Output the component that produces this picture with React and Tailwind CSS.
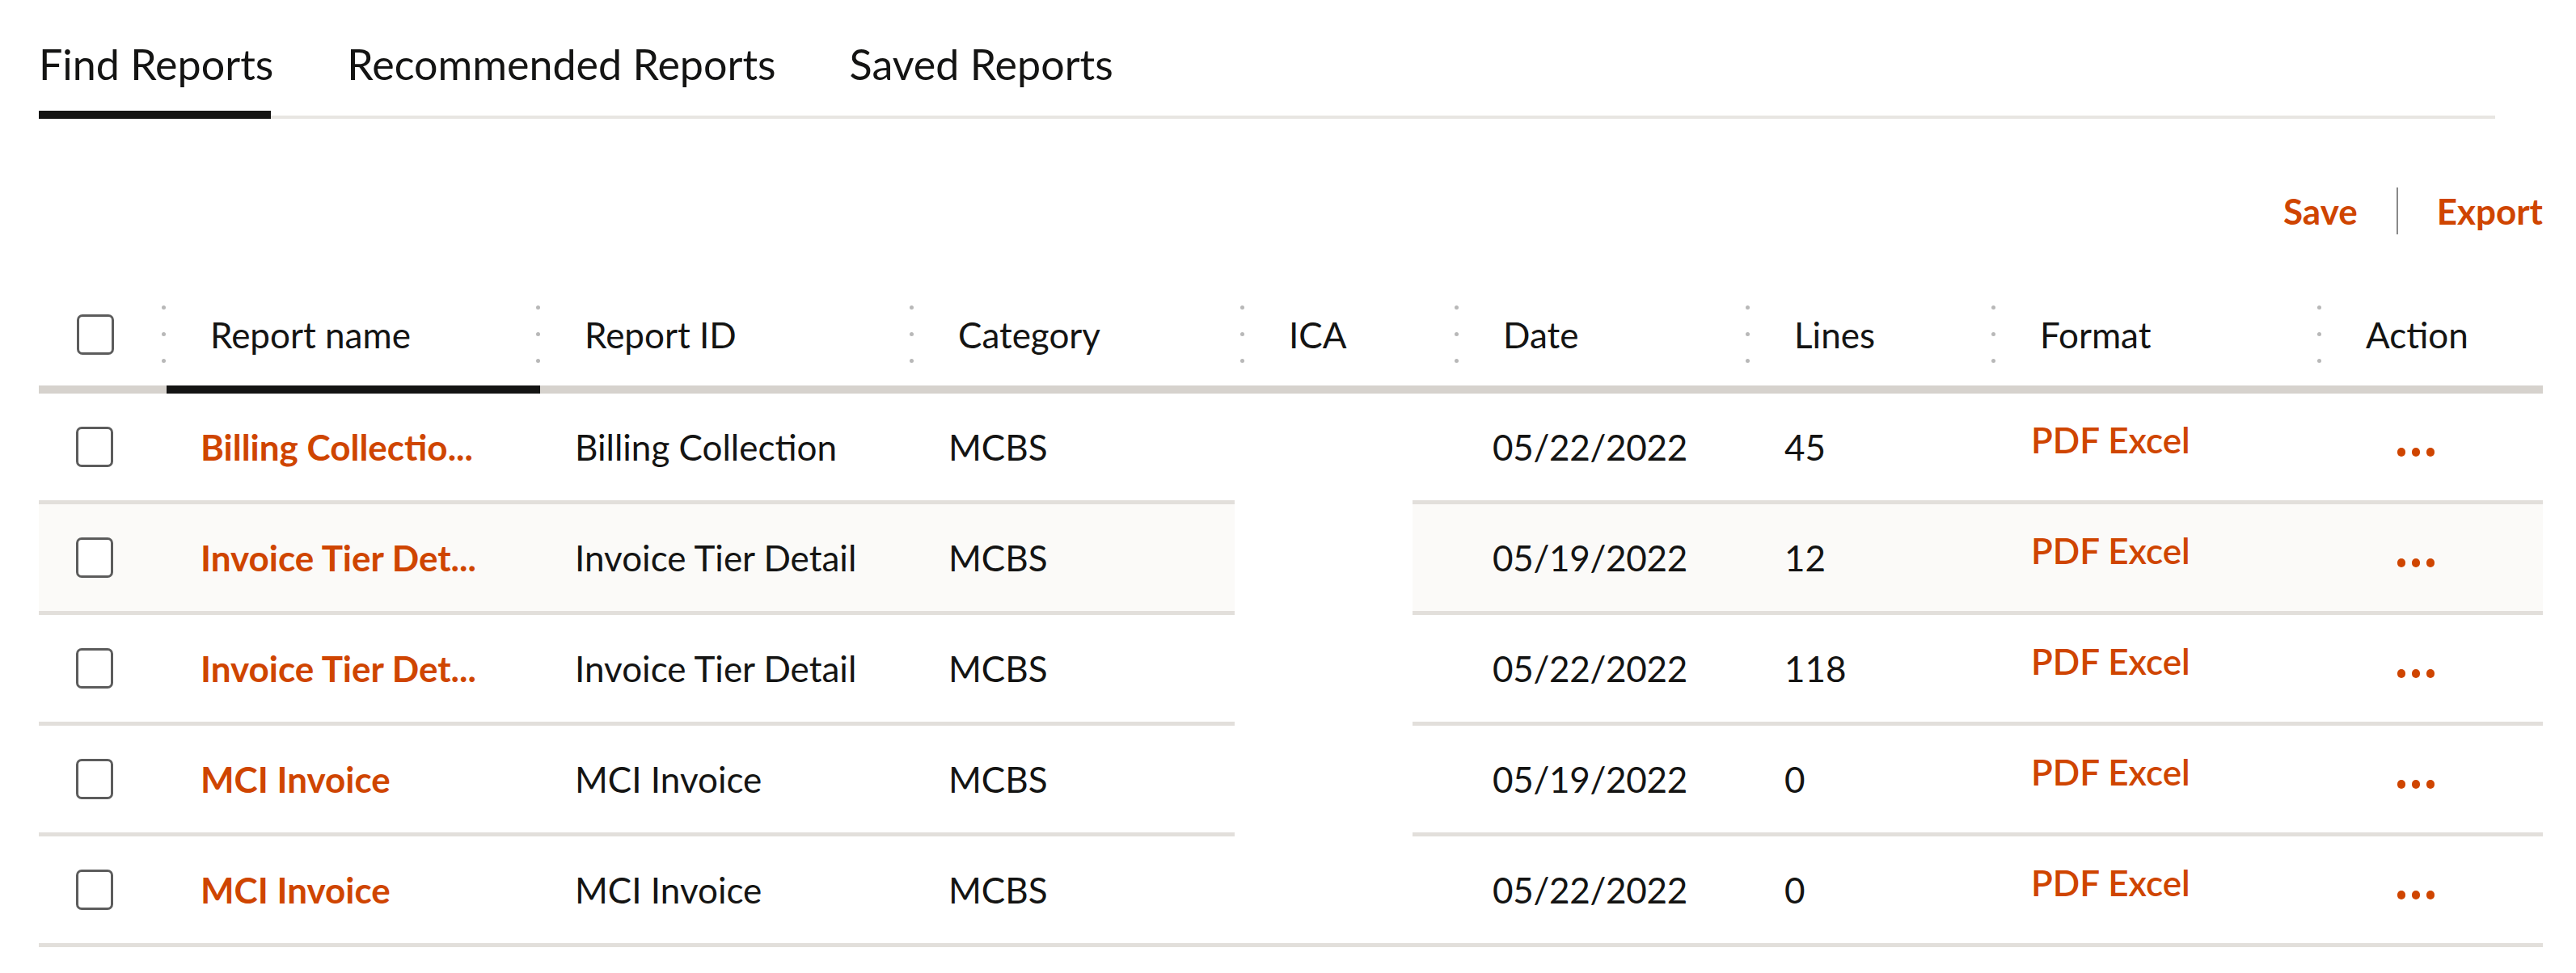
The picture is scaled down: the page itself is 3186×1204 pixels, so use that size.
import React from 'react';

const rows = [
  { name: 'Billing Collectio...', id: 'Billing Collection', cat: 'MCBS', date: '05/22/2022', lines: '45' },
  { name: 'Invoice Tier Det...', id: 'Invoice Tier Detail', cat: 'MCBS', date: '05/19/2022', lines: '12', shaded: true },
  { name: 'Invoice Tier Det...', id: 'Invoice Tier Detail', cat: 'MCBS', date: '05/22/2022', lines: '118' },
  { name: 'MCI Invoice', id: 'MCI Invoice', cat: 'MCBS', date: '05/19/2022', lines: '0' },
  { name: 'MCI Invoice', id: 'MCI Invoice', cat: 'MCBS', date: '05/22/2022', lines: '0' },
];

const headers = ['Report name', 'Report ID', 'Category', 'ICA', 'Date', 'Lines', 'Format', 'Action'];

const Checkbox = () => (
  <div className="w-[46px] h-[50px] border-[3px] border-[#5c5c5c] rounded-[7px] bg-white" />
);

const Dots = () => (
  <div className="flex flex-col gap-[28px]">
    <span className="block w-[5px] h-[5px] rounded-full bg-[#b8b8b8]" />
    <span className="block w-[5px] h-[5px] rounded-full bg-[#b8b8b8]" />
    <span className="block w-[5px] h-[5px] rounded-full bg-[#b8b8b8]" />
  </div>
);

const App = () => {
  return (
    <div className="min-h-screen bg-white pl-[48px] pr-[41px] font-['Lato','Liberation_Sans',sans-serif] text-[#141413]">
      {/* Tabs */}
      <div className="pt-[54px] flex gap-[91px] text-[52px] leading-[50px]">
        <span>Find Reports</span>
        <span>Recommended Reports</span>
        <span>Saved Reports</span>
      </div>
      <div className="mt-[33px] flex items-end w-[3038px]">
        <div className="w-[287px] h-[10px] bg-[#141413]" />
        <div className="flex-1 h-[4px] bg-[#e8e6e2]" />
      </div>

      {/* Save / Export */}
      <div className="mt-[85px] h-[58px] flex justify-end items-center text-[44px] leading-[44px] font-bold text-[#cf4500]">
        <span>Save</span>
        <div className="w-[2px] h-[58px] bg-[#8a8a8a] mx-[48px]" />
        <span>Export</span>
      </div>

      {/* Table header */}
      <div className="mt-[60px] grid grid-cols-[152px_463px_462px_409px_265px_360px_304px_403px_279px] h-[127px] text-[44px] leading-[44px]">
        <div className="flex items-center pl-[47px]">
          <Checkbox />
        </div>
        {headers.map((h) => (
          <div key={h} className="flex items-center">
            <Dots />
            <span className="ml-[55px]">{h}</span>
          </div>
        ))}
      </div>
      <div className="flex h-[10px]">
        <div className="w-[158px] bg-[#d6d2cd]" />
        <div className="w-[462px] bg-[#141413]" />
        <div className="flex-1 bg-[#d6d2cd]" />
      </div>

      {/* Table body */}
      <div className="text-[44px] leading-[44px]">
        {rows.map((r, i) => {
          const last = i === rows.length - 1;
          const cell = `h-[137px] flex items-center border-b-[5px] border-[#e2dfdb] ${r.shaded ? 'bg-[#fbfaf8]' : 'bg-white'}`;
          return (
            <div key={i} className="grid grid-cols-[152px_463px_462px_402px_220px_412px_304px_403px_279px]">
              <div className={`${cell} pl-[46px]`}>
                <Checkbox />
              </div>
              <div className={`${cell} pl-[48px] font-bold text-[#cf4500]`}>{r.name}</div>
              <div className={`${cell} pl-[48px]`}>{r.id}</div>
              <div className={`${cell} pl-[48px]`}>{r.cat}</div>
              <div className={last ? 'h-[137px] border-b-[5px] border-[#e2dfdb]' : 'h-[137px]'} />
              <div className={`${cell} pl-[99px] tracking-[-0.3px]`}>{r.date}</div>
              <div className={`${cell} pl-[48px]`}>{r.lines}</div>
              <div className={`${cell} pl-[49px] pb-[18px] font-semibold text-[#cf4500]`}>PDF Excel</div>
              <div className={`${cell} pl-[99px] pt-[12px]`}>
                <div className="flex gap-[8px]">
                  <span className="block w-[10px] h-[11px] rounded-full bg-[#cf4500]" />
                  <span className="block w-[10px] h-[11px] rounded-full bg-[#cf4500]" />
                  <span className="block w-[10px] h-[11px] rounded-full bg-[#cf4500]" />
                </div>
              </div>
            </div>
          );
        })}
      </div>
    </div>
  );
};

export default App;
